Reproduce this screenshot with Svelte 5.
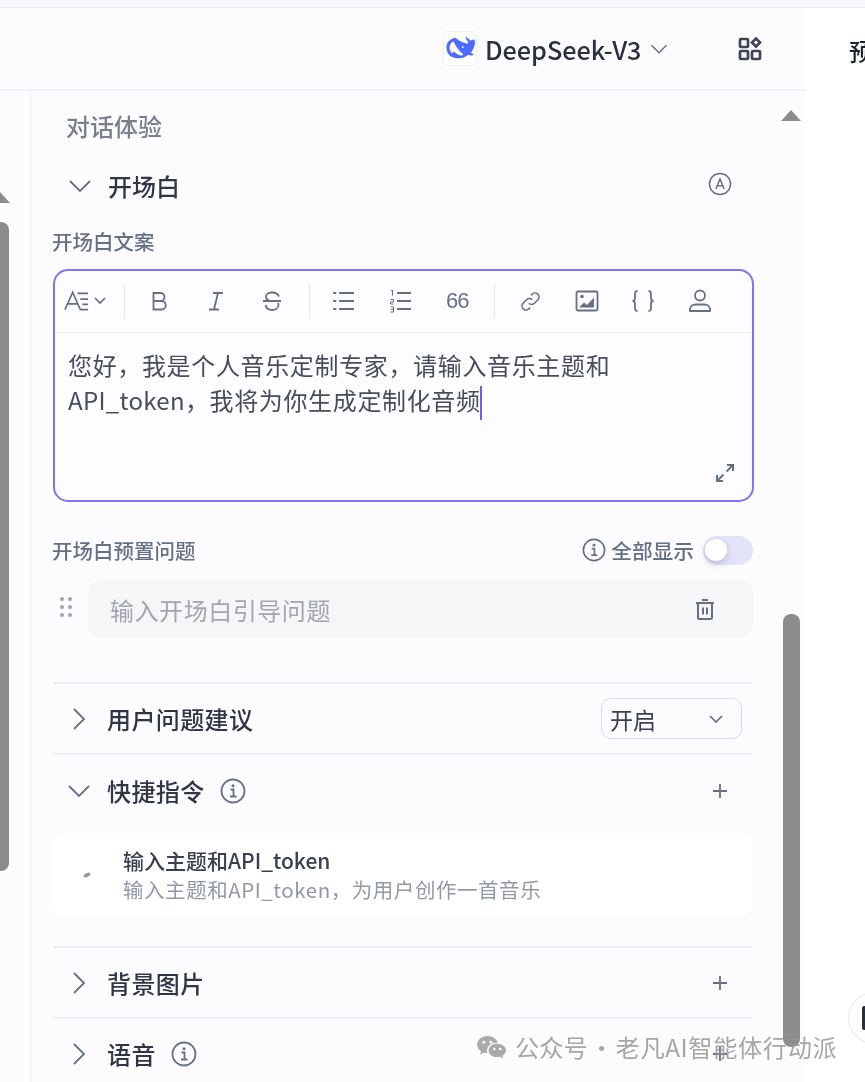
<script>
	const groupOne = ['bold', 'italic', 'strike'];
	const groupTwo = ['ul', 'ol', 'quote'];
	const groupThree = ['link', 'image', 'code', 'user'];
</script>

{#snippet chevron(dir)}
	<svg class="chev" class:right={dir === 'right'} viewBox="0 0 24 24" width="24" height="24">
		<path d="M2 7l10 10L22 7" />
	</svg>
{/snippet}

{#snippet info()}
	<svg class="info" viewBox="0 0 26 26" width="26" height="26">
		<circle cx="13" cy="13" r="11.5" />
		<path d="M10.5 11.5h3v7M10 18.5h6.5" />
		<circle class="dot" cx="13" cy="7.8" r="1.5" />
	</svg>
{/snippet}

{#snippet plus()}
	<svg class="plus" viewBox="0 0 16 16" width="16" height="16"><path d="M8 1v14M1 8h14" /></svg>
{/snippet}

{#snippet tool(name)}
	<button class="tool">
		{#if name === 'bold'}
			<svg viewBox="0 0 24 24" width="24" height="24"><path d="M6.500 4h7a4 4 0 0 1 0 8h-7zM6.500 12h8a4.200 4.200 0 0 1 0 8.500h-8z" /></svg>
		{:else if name === 'italic'}
			<svg viewBox="0 0 24 24" width="24" height="24"><path d="M9 4h10M5 20.500h10M14 4l-4 16.500" /></svg>
		{:else if name === 'strike'}
			<svg viewBox="0 0 24 24" width="24" height="24"><path d="M3 12h18M19 7.500C18 5 15.500 3.500 12 3.500c-3.500 0-6 1.700-6 4.200 0 1.600 1 3 3 3.800M5.500 16c.6 3 3 5 6.500 5s6.500-2 6.500-5c0-.8-.2-1.500-.5-2" /></svg>
		{:else if name === 'ul'}
			<svg viewBox="0 0 24 24" width="24" height="24"><path d="M7 4h15M7 12h15M7 20h15" /><path class="dots" d="M2 4h1.500M2 12h1.500M2 20h1.500" /></svg>
		{:else if name === 'ol'}
			<svg viewBox="0 0 24 24" width="24" height="24"><path d="M8 4h14M8 12h14M8 20h14" /><path class="thin" d="M2 2l1.500-1v5.500M1.500 10.500h3v2.500h-3v2h3M1.500 18h3v5h-3M2 20.500h2.500" /></svg>
		{:else if name === 'quote'}
			<span class="quote">66</span>
		{:else if name === 'link'}
			<svg viewBox="0 0 24 24" width="21" height="21"><path d="M10 14a4.500 4.500 0 0 0 6.500 0l4-4A4.600 4.600 0 0 0 14 3.500l-1.500 1.500M14 10a4.500 4.500 0 0 0-6.500 0l-4 4a4.600 4.600 0 0 0 6.500 6.500l1.500-1.500" /></svg>
		{:else if name === 'image'}
			<svg viewBox="0 0 24 24" width="24" height="24"><rect x="1.500" y="2.500" width="21" height="19" rx="1.500" /><path class="fill" d="M4 18.500l5-5 3 2.500 7-7.500v10z" /><circle class="fill" cx="7" cy="7.500" r="1.800" /></svg>
		{:else if name === 'code'}
			<svg viewBox="0 0 24 24" width="24" height="24"><path d="M6.500 2C4 2 4 3.500 4 6v3c0 2-.5 3-2.500 3C3.500 12 4 13 4 15v3c0 2.500 0 4 2.500 4M17.500 2C20 2 20 3.500 20 6v3c0 2 .5 3 2.500 3-2 0-2.500 1-2.500 3v3c0 2.500 0 4-2.500 4" /></svg>
		{:else if name === 'user'}
			<svg viewBox="0 0 24 24" width="24" height="24"><circle cx="12" cy="6.500" r="5" /><path d="M2 22v-1.500c0-3 2.500-5 5.500-5h9c3 0 5.500 2 5.500 5V22z" /></svg>
		{/if}
	</button>
{/snippet}

<div class="page">
	<div class="topstrip"></div>
	<div class="columns">
		<main class="main">
			<header class="header">
				<div class="logo">
					<svg viewBox="0 0 32 26" width="29" height="24">
						<path fill="#4d6bfe" d="M31 3.500c-.6-.3-1 .3-1.500.7-1.200-.2-2.200 0-3 .8-.2-1.300-1-2-2.200-2.500-.7-.3-1.200-.7-1.500-1.400-.2-.4-.3-.8-.6-1-.9 1.500-.3 4 2 5.600.4.300.5.500.2 1l-.8 1.600C19 7 14.800 5.800 11.200 2.300 10.300 1.500 9.500 1.500 8.800 2 3.500 4 .5 7 .5 12.500c0 6 4 10.500 9.500 11.500 5.500.9 10.500.3 14.500-3.500 1 .5 2.500.8 4 .7 1.800-.1 2.500-1 1.800-1.600-1.200-.4-2-.7-2.800-1.400 2.200-2.500 3.800-6 4.500-10.700 0-1.600-.2-2.800-1-4z"/>
						<path fill="#fff" d="M8 5.500c-3.200 1.700-4.500 5-4 8.500.5 2.500 1.800 4.500 3.500 5.500.3-.5-.7-1.500-.4-2.200.5-.6 1.800 0 3.200.9 1.500 1 3.500 2.500 5.500 3 1.500.3 2.500-.5 3.500-1-4.500-3.500-8.500-9-11.300-14.700z"/>
						<circle fill="#fff" cx="18.500" cy="12" r="1"/>
					</svg>
				</div>
				<span class="model">DeepSeek-V3</span>
				<svg class="chev model-chev" viewBox="0 0 24 24" width="18" height="18"><path d="M2 7l10 10L22 7" /></svg>
				<svg class="apps" viewBox="0 0 24 24" width="24" height="24">
					<rect x="2" y="2" width="8" height="8" rx="1" />
					<rect x="2" y="14" width="8" height="8" rx="1" />
					<rect x="14" y="14" width="8" height="8" rx="1" />
					<path d="M18 1.500l4 4-4 4-4-4z" />
				</svg>
			</header>

			<div class="body">
				<div class="side"></div>
				<section class="content">
					<h2 class="section-title">对话体验</h2>

					<div class="row-open">
						{@render chevron('down')}
						<span class="row-title">开场白</span>
						<svg class="auto" viewBox="0 0 24 24" width="24" height="24">
							<circle cx="12" cy="12" r="10.500" />
							<path d="M7.800 17l4.200-10 4.200 10M9.200 13.800h5.600" />
						</svg>
					</div>

					<div class="label first-label">开场白文案</div>

					<div class="editor">
						<div class="toolbar">
							<button class="tool-format">
								<svg viewBox="0 0 26 24" width="25" height="24">
									<path d="M1 21L9 3l8 18M4 15h10M14 4h11M17 10h8M19 15.500h6M17 21h8" />
								</svg>
								<svg class="mini" viewBox="0 0 12 8" width="12" height="8"><path d="M1 1l5 5 5-5" /></svg>
							</button>
							<i class="sep"></i>
							<div class="group">
								{#each groupOne as name}{@render tool(name)}{/each}
							</div>
							<i class="sep"></i>
							<div class="group">
								{#each groupTwo as name}{@render tool(name)}{/each}
							</div>
							<i class="sep"></i>
							<div class="group">
								{#each groupThree as name}{@render tool(name)}{/each}
							</div>
						</div>
						<div class="text">
							您好，我是个人音乐定制专家，请输入音乐主题和<br />
							<span class="latin">API_token</span>，我将为你生成定制化音频<span class="caret"></span>
						</div>
						<svg class="expand" viewBox="0 0 20 20" width="20" height="20">
							<path d="M12 2h6v6M18 2l-6.500 6.500M8 18H2v-6M2 18l6.500-6.500" />
						</svg>
					</div>

					<div class="preset-head">
						<span class="label">开场白预置问题</span>
						<div class="show-all">
							{@render info()}
							<span>全部显示</span>
							<div class="toggle"><span class="knob"></span></div>
						</div>
					</div>

					<div class="question">
						<svg class="drag" viewBox="0 0 14 22" width="14" height="22">
							<circle cx="3" cy="3" r="2" /><circle cx="11" cy="3" r="2" />
							<circle cx="3" cy="11" r="2" /><circle cx="11" cy="11" r="2" />
							<circle cx="3" cy="19" r="2" /><circle cx="11" cy="19" r="2" />
						</svg>
						<div class="question-input">
							<span>输入开场白引导问题</span>
							<svg class="trash" viewBox="0 0 20 22" width="20" height="22">
								<path d="M7 2h6M1 5h18M3 5v14.500a1.500 1.500 0 0 0 1.500 1.500h11a1.500 1.500 0 0 0 1.500-1.500V5M8 9.500v7M12 9.500v7" />
							</svg>
						</div>
					</div>

					<div class="row suggest">
						<span class="row-icon">{@render chevron('right')}</span>
						<span class="row-title">用户问题建议</span>
						<div class="select">
							<span>开启</span>
							<svg class="mini" viewBox="0 0 14 8" width="14" height="8"><path d="M1 1l6 6 6-6" /></svg>
						</div>
					</div>

					<div class="row shortcut">
						<span class="row-icon">{@render chevron('down')}</span>
						<span class="row-title">快捷指令</span>
						{@render info()}
						<span class="row-end">{@render plus()}</span>
					</div>

					<div class="card">
						<svg class="card-icon" viewBox="0 0 8 6" width="8" height="6"><ellipse cx="4" cy="3" rx="3.600" ry="1.900" transform="rotate(-25 4 3)" /></svg>
						<div class="card-text">
							<div class="card-title">输入主题和API_token</div>
							<div class="card-sub">输入主题和API_token，为用户创作一首音乐</div>
						</div>
					</div>

					<div class="row background">
						<span class="row-icon">{@render chevron('right')}</span>
						<span class="row-title">背景图片</span>
						<span class="row-end">{@render plus()}</span>
					</div>

					<div class="row">
						<span class="row-icon">{@render chevron('right')}</span>
						<span class="row-title">语音</span>
						{@render info()}
						<span class="row-end">{@render plus()}</span>
					</div>
				</section>
			</div>
		</main>
		<aside class="preview">
			<div class="preview-title">预览</div>
		</aside>
	</div>

	<!-- overlays: scrollbars, watermark -->
	<div class="arrow left-arrow"></div>
	<div class="thumb left-thumb"></div>
	<div class="arrow right-arrow"></div>
	<div class="thumb right-thumb"></div>
	<div class="float-btn"><i></i></div>
	<div class="watermark">
		<svg viewBox="0 0 32 26" width="31" height="25">
			<path fill="#aaa" d="M12 1C5.900 1 1 5 1 10c0 2.900 1.600 5.400 4.100 7.100L4 20.500l4-2c1.200.3 2.400.5 3.700.5-.3-1-.5-1.800-.5-2.700C11.200 11.500 15.800 8 21.500 8c.4 0 .8 0 1.100.1C21.500 4 17.200 1 12 1z"/>
			<path fill="#aaa" d="M31 16c0-4.100-4.100-7-9-7s-9 2.900-9 7 4.100 7 9 7c1 0 2-.1 3-.4l3.200 2-.9-3C29.600 20.300 31 18.300 31 16z"/>
			<circle fill="#fdfdff" cx="8" cy="7.500" r="1.500"/><circle fill="#fdfdff" cx="15.500" cy="7.500" r="1.500"/>
			<circle fill="#fdfdff" cx="19" cy="14.500" r="1.300"/><circle fill="#fdfdff" cx="25" cy="14.500" r="1.300"/>
		</svg>
		<span class="wm-text">公众号 · <span class="wm-name">老凡AI智能体行动派</span></span>
	</div>
</div>

<style>
	:global(body) {
		margin: 0;
		background: #fff;
	}

	.page {
		position: relative;
		width: 865px;
		height: 1082px;
		overflow: hidden;
		font-family: "Noto Sans CJK SC", "Noto Sans", sans-serif;
		color: #353b4b;
		/* the reference is a soft upscaled capture */
		filter: blur(0.4px);
	}

	.topstrip {
		height: 7px;
		background: #f7f7fc;
		border-bottom: 1px solid #ecebf5;
	}

	.columns {
		display: flex;
		height: 1074px;
	}

	.main {
		width: 806px;
		background: #fcfcff;
		display: flex;
		flex-direction: column;
		flex: none;
	}

	.preview {
		flex: 1;
		background: #fff;
		padding: 25px 0 0 43px;
		overflow: hidden;
	}

	.preview-title {
		font-size: 24px;
		font-weight: 500;
		line-height: 36px;
		color: #1d2230;
		white-space: nowrap;
	}

	.header {
		flex: none;
		border-bottom: 2px solid #f0f0f8;
		display: flex;
		align-items: center;
		padding-left: 443px;
		box-sizing: content-box;
		height: 81px;
	}

	.logo {
		width: 32px;
		height: 33px;
		border: 1px solid #eeeef5;
		border-radius: 6px;
		background: #fff;
		display: flex;
		align-items: center;
		justify-content: center;
		margin-top: -1px;
	}

	.model {
		font-size: 25.200px;
		line-height: 36px;
		margin-left: 8px;
		color: #2a3040;
		font-weight: 500;
		width: 156px;
		white-space: nowrap;
	}

	.model-chev {
		margin-left: 9px;
	}

	.apps {
		margin-left: 70px;
	}

	.apps rect, .apps path {
		fill: none;
		stroke: #3f4555;
		stroke-width: 2.700;
	}

	.body {
		flex: 1;
		display: flex;
		min-height: 0;
	}

	.side {
		width: 30px;
		flex: none;
		border-right: 1px solid #ececf3;
	}

	.content {
		width: 700px;
		margin-left: 22px;
		flex: none;
	}

	.section-title {
		margin: 0;
		padding: 17px 0 0 13px;
		font-size: 24px;
		font-weight: 500;
		line-height: 36px;
		color: #7a7f8d;
		height: 36px;
	}

	.row-open {
		display: flex;
		align-items: center;
		height: 40px;
		margin-top: 22px;
		padding-left: 15px;
		position: relative;
	}

	.row-title {
		font-size: 24px;
		font-weight: 500;
		line-height: 36px;
		color: #303646;
		white-space: nowrap;
	}

	.row-open .row-title {
		margin-left: 16px;
	}

	.chev {
		flex: none;
	}

	.chev path {
		fill: none;
		stroke: #667085;
		stroke-width: 1.800;
	}

	.chev.right {
		transform: rotate(-90deg);
	}

	.auto {
		margin-left: auto;
		margin-right: 21px;
		margin-top: -4px;
	}

	.auto circle, .auto path {
		fill: none;
		stroke: #667085;
		stroke-width: 1.500;
	}

	.label {
		font-size: 20.500px;
		line-height: 30px;
		font-weight: 500;
		color: #667085;
		white-space: nowrap;
		margin-left: -1px;
	}

	.first-label {
		margin-top: 20px;
		height: 30px;
	}

	.editor {
		position: relative;
		height: 229px;
		margin-top: 13px;
		margin-right: -1px;
		border: 2px solid #7f74f4;
		border-radius: 15px;
		background: #fdfdff;
	}

	.toolbar {
		display: flex;
		align-items: center;
		height: 60px;
		padding-bottom: 1px;
		border-bottom: 1px solid #ececf2;
	}

	.tool-format {
		display: flex;
		align-items: center;
		gap: 5px;
		width: 69px;
		padding: 0 0 0 9px;
		margin: 0;
		border: 0;
		background: none;
	}

	.tool-format svg path {
		fill: none;
		stroke: #667085;
		stroke-width: 1.700;
	}

	.mini path {
		fill: none;
		stroke: #667085;
		stroke-width: 1.700;
	}

	.sep {
		width: 1px;
		height: 34px;
		background: #e4e6ee;
		flex: none;
	}

	.group {
		display: flex;
		margin: 0 8.500px 0 6px;
		flex: none;
	}

	.group:last-child {
		margin-left: 7px;
	}

	.tool {
		width: 56.500px;
		height: 34px;
		padding: 0;
		border: 0;
		background: none;
		display: flex;
		align-items: center;
		justify-content: center;
		color: #667085;
		flex: none;
	}

	.tool svg {
		fill: none;
		stroke: #667085;
		stroke-width: 1.800;
	}

	.tool svg .dots {
		stroke-linecap: round;
		stroke-width: 2.200;
	}

	.tool svg .thin {
		stroke-width: 1;
	}

	.tool svg .fill {
		fill: #667085;
		stroke: none;
	}

	.quote {
		font-size: 22px;
		line-height: 30px;
		letter-spacing: -1px;
		font-weight: 500;
	}

	.text {
		padding: 14px 13px 0;
		font-size: 24px;
		line-height: 35px;
		letter-spacing: 0.650px;
		color: #474d5c;
		white-space: nowrap;
	}

	.latin {
		letter-spacing: 0.300px;
	}

	.caret {
		display: inline-block;
		width: 2px;
		height: 34px;
		background: #6a5ff0;
		vertical-align: middle;
		margin-left: -1px;
	}

	.expand {
		position: absolute;
		right: 17px;
		bottom: 17px;
	}

	.expand path {
		fill: none;
		stroke: #667085;
		stroke-width: 2;
	}

	.preset-head {
		display: flex;
		align-items: center;
		justify-content: space-between;
		height: 30px;
		margin-top: 33px;
	}

	.show-all {
		display: flex;
		align-items: center;
		font-size: 20.700px;
		font-weight: 500;
		color: #667085;
		white-space: nowrap;
	}

	.show-all .info {
		width: 24px;
		height: 24px;
		margin-right: 5px;
		margin-left: 0;
	}

	.info {
		flex: none;
		margin-left: 15px;
	}

	.info circle, .info path {
		fill: none;
		stroke: #667085;
		stroke-width: 1.800;
	}

	.info .dot {
		fill: #667085;
		stroke: none;
	}

	.toggle {
		position: relative;
		width: 50px;
		height: 29px;
		border-radius: 15px;
		background: #e3e3fb;
		margin-left: 9px;
	}

	.knob {
		position: absolute;
		left: 2px;
		top: 3px;
		width: 22px;
		height: 22px;
		border-radius: 50%;
		background: #fff;
		box-shadow: 0 3px 7px rgba(90, 90, 140, 0.3);
	}

	.question {
		display: flex;
		align-items: center;
		margin-top: 15px;
	}

	.drag {
		flex: none;
		margin: -5px 0 0 6px;
		fill: #9ea3b0;
	}

	.question-input {
		display: flex;
		align-items: center;
		justify-content: space-between;
		height: 58px;
		flex: 1;
		margin-left: 15px;
		padding: 0 38px 0 22px;
		background: #f6f6f8;
		border-radius: 14px;
		font-size: 24px;
		letter-spacing: 0.550px;
		color: #a1a5af;
	}

	.trash {
		fill: none;
		stroke: #667085;
		stroke-width: 2;
	}

	.row {
		display: flex;
		align-items: center;
		height: 70px;
		border-top: 2px solid #eeeef6;
		position: relative;
	}

	.suggest {
		margin-top: 44px;
		height: 69px;
	}

	.background {
		margin-top: 29px;
		height: 69px;
	}

	.row-icon {
		width: 54px;
		display: flex;
		padding-left: 14px;
		box-sizing: border-box;
		flex: none;
	}

	.row .row-title {
		letter-spacing: 0.400px;
	}

	.row-end {
		margin-left: auto;
		margin-right: 25px;
		display: flex;
	}

	.plus path {
		fill: none;
		stroke: #667085;
		stroke-width: 1.800;
	}

	.select {
		margin-left: auto;
		margin-right: 11px;
		width: 141px;
		height: 41px;
		box-sizing: border-box;
		border: 1.500px solid #d7dae9;
		border-radius: 10px;
		display: flex;
		align-items: center;
		justify-content: space-between;
		padding: 0 18px 0 8px;
		font-size: 23px;
		color: #3a4050;
	}

	.shortcut {
		height: 71px;
		padding-bottom: 3px;
	}

	.card {
		display: flex;
		align-items: center;
		height: 84px;
		margin-top: 4px;
		background: #fff;
		border-radius: 14px;
	}

	.card-icon {
		margin-left: 30px;
		flex: none;
		fill: #999;
	}

	.card-text {
		margin-left: 32px;
		white-space: nowrap;
	}

	.card-title {
		font-size: 21px;
		font-weight: 500;
		line-height: 29px;
		color: #3a4050;
	}

	.card-sub {
		font-size: 20.500px;
		line-height: 29px;
		letter-spacing: 0.550px;
		color: #9298a6;
	}

	/* things lying over the page */
	.arrow {
		position: absolute;
		width: 0;
		height: 0;
		border-left: 10px solid transparent;
		border-right: 10px solid transparent;
		border-bottom: 11px solid #8c8c8c;
	}

	.left-arrow {
		left: -10px;
		top: 192px;
	}

	.right-arrow {
		left: 781px;
		top: 110px;
	}

	.thumb {
		position: absolute;
		background: #8c8c8c;
		border-radius: 8px;
	}

	.left-thumb {
		left: -8px;
		top: 222px;
		width: 17px;
		height: 649px;
	}

	.right-thumb {
		left: 783px;
		top: 614px;
		width: 17px;
		height: 433px;
	}

	.float-btn {
		position: absolute;
		left: 848px;
		top: 992px;
		width: 52px;
		height: 52px;
		box-sizing: border-box;
		border: 1.500px solid #e3e5ef;
		border-radius: 50%;
		background: #fff;
	}

	.float-btn i {
		position: absolute;
		left: 13px;
		top: 13px;
		width: 8px;
		height: 24px;
		border-radius: 2px;
		background: #2a3040;
	}

	.watermark {
		position: absolute;
		left: 476px;
		top: 1030px;
		display: flex;
		align-items: center;
		gap: 8px;
		font-size: 24.200px;
		line-height: 34px;
		color: rgba(150, 150, 150, 0.85);
		white-space: nowrap;
	}

	.wm-text {
		word-spacing: -3.500px;
	}

	.wm-name {
		letter-spacing: 0.650px;
	}
</style>
